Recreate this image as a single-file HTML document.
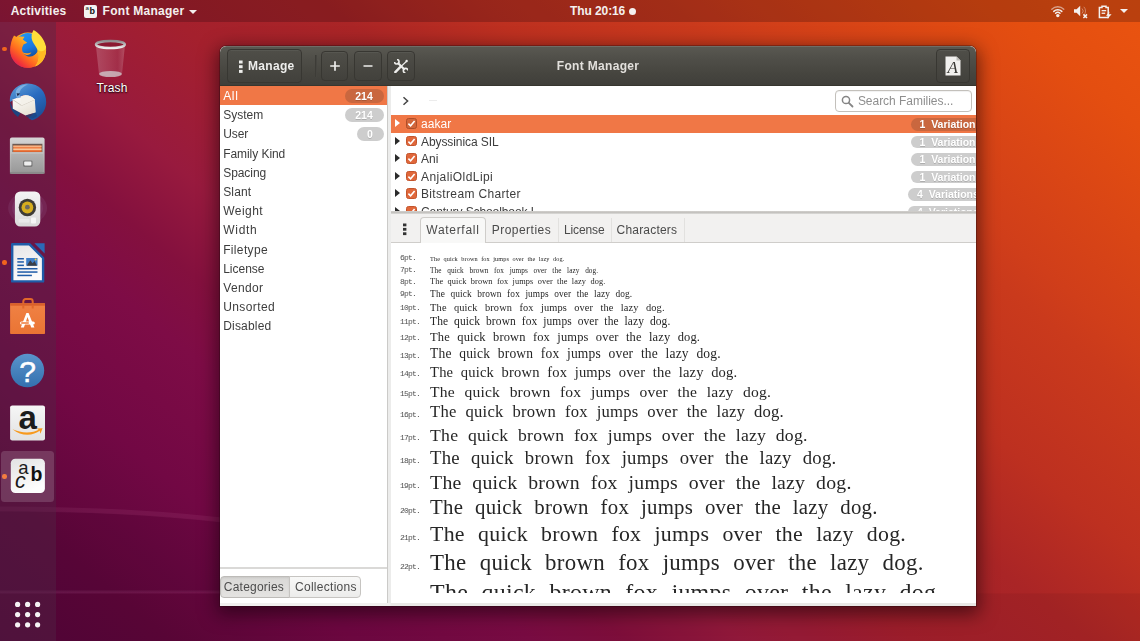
<!DOCTYPE html>
<html>
<head>
<meta charset="utf-8">
<title>Font Manager</title>
<style>
*{box-sizing:border-box;margin:0;padding:0}
html,body{width:1140px;height:641px;overflow:hidden}
body{position:relative;font-family:"Liberation Sans","DejaVu Sans",sans-serif;font-size:12px;color:#3c3c3c;background:#7a0d40}
#bg{position:absolute;left:0;top:0;width:1140px;height:641px;background:
 linear-gradient(40deg,#52053a 0%,#5c063a 9%,#720844 19%,#7e0c46 28%,#84103e 33%,#981a3e 39%,#a4202d 48%,#aa2526 57%,#bd3020 65%,#ca3a1c 75%,#d03e1a 78%,#e44e10 92%,#ea5410 100%)}
#topbar{position:absolute;left:0;top:0;width:1140px;height:22px;background:rgba(20,0,8,.22);color:#f4f0ee;font-weight:bold;font-size:12px;line-height:22.6px}
#topbar span{top:0;white-space:nowrap}
#dock{position:absolute;left:0;top:22px;width:56px;height:619px;background:rgba(81,40,70,.40)}
.ind{position:absolute;left:2.2px;width:4.4px;height:4.4px;border-radius:2.2px;background:#f0641e}
.dk{position:absolute;left:8px;width:40px;height:40px}
#win{will-change:transform;position:absolute;left:220px;top:46px;width:756px;height:559.5px;background:#fff;border-radius:6px 6px 0 0;box-shadow:0 5px 18px 3px rgba(15,0,8,.55),0 0 0 1px rgba(40,10,10,.30);overflow:hidden}
#hdr{position:absolute;left:0;top:0;width:756px;height:40px;background:linear-gradient(#5a5952,#504f49 30%,#46453f 70%,#403f3a);border-bottom:1px solid #37362f;color:#eee;border-radius:6px 6px 0 0;box-shadow:inset 0 1px 0 rgba(255,255,255,.12)}
.hb{position:absolute;border:1px solid #383732;border-radius:4px;background:linear-gradient(#4f4e48,#42413c);box-shadow:inset 0 1px 0 rgba(255,255,255,.05);color:#eeeeec;font-weight:bold;font-size:12px;text-align:center}
#side{position:absolute;left:0;top:40px;width:166.5px;height:520px;background:#fff}
.sr{position:absolute;left:0;width:166.5px;height:19.2px;line-height:20px;font-size:12px;color:#3d3d3d;white-space:nowrap}
.sr.sel{background:#f07746;color:#fff}
.bd{position:absolute;right:3px;top:2.5px;height:14px;border-radius:7px;background:#cdcdcd;color:#fff;font-weight:bold;font-size:10.5px;line-height:14px;text-align:center;letter-spacing:0;text-shadow:0 1px 0 rgba(0,0,0,.15)}
.sel .bd,.sel .vb{background:#c9673f}
#vsep{position:absolute;left:166.5px;top:40px;width:4px;height:520px;background:#ececeb;border-left:1.5px solid #cbcac8}
#right{position:absolute;left:170.5px;top:40px;width:585.5px;height:520px;background:#fff;overflow:hidden}
.fr{position:absolute;left:0;width:586px;height:17.5px;line-height:18.5px;font-size:12px;color:#3d3d3d;white-space:nowrap}
.fr.sel{background:#f07746;color:#fff}
.tri{position:absolute;left:4.5px;top:4.2px;width:0;height:0;border-left:5.5px solid #2b2b2b;border-top:4.5px solid transparent;border-bottom:4.5px solid transparent}
.sel .tri{border-left-color:#fff}
.cb{position:absolute;left:15.6px;top:3.2px;width:10.5px;height:10.5px;border-radius:2.5px;background:#e0673a;border:1px solid #c4552c}
.sel .cb{background:#d2653a;border-color:#ae4e29}
.cb svg{position:absolute;left:-1px;top:-1px}
.vb{position:absolute;top:3px;height:12.5px;border-radius:7px;background:#cdcdcd;color:#fff;font-weight:bold;font-size:10.5px;line-height:12.5px;white-space:pre;letter-spacing:0;text-shadow:0 1px 0 rgba(0,0,0,.15)}
.wf{position:absolute;left:39.6px;height:0;line-height:0;white-space:pre;font-family:"Liberation Serif","DejaVu Serif",serif;color:#262626;letter-spacing:.012em}
.pt{position:absolute;left:9.6px;height:0;line-height:0;font-family:"Liberation Mono","DejaVu Sans Mono",monospace;font-size:8px;letter-spacing:-.85px;color:#505050;white-space:pre}
.tab{top:0;height:29px;line-height:33px;font-size:12px;color:#4a4a4a;white-space:nowrap}
</style>
</head>
<body>
<div id="bg"></div>
<svg style="position:absolute;left:0;top:0" width="1140" height="641" viewBox="0 0 1140 641">
 <path d="M0 511C80 511 160 515 222 522L560 560L560 592L0 592Z" fill="rgba(30,0,30,.07)"/>
 <path d="M0 509C80 509 160 513 222 520L420 548" stroke="rgba(255,170,220,.075)" stroke-width="5" fill="none"/>
 <defs><linearGradient id="ln" x1="0" y1="0" x2="1" y2="0"><stop offset="0" stop-color="#ffbee6" stop-opacity=".08"/><stop offset=".35" stop-color="#ffbee6" stop-opacity=".06"/><stop offset=".55" stop-color="#ffbee6" stop-opacity="0"/></linearGradient></defs><rect x="0" y="590.500" width="1140" height="3" fill="url(#ln)"/>
 <rect x="0" y="593.500" width="1140" height="48" fill="rgba(40,0,20,.07)"/>
</svg>

<div id="topbar">
 <span style="position:absolute;left:10.70px;letter-spacing:0.25px;">Activities</span>
 <div style="position:absolute;left:84px;top:4.5px;width:13px;height:13px;border-radius:2px;background:#f4f3f1;color:#111;line-height:13px"><span style="position:absolute;left:1.5px;top:-2.5px;font-weight:normal;font-size:6px">a</span><span style="position:absolute;left:5.5px;top:.5px;font-size:9px">b</span></div>
 <span style="position:absolute;left:102.60px;letter-spacing:0.27px;">Font Manager</span>
 <div style="position:absolute;left:188.6px;top:9.8px;width:0;height:0;border-top:4.2px solid #f4f0ee;border-left:4px solid transparent;border-right:4px solid transparent"></div>
 <span style="position:absolute;left:570.00px;letter-spacing:-0.09px;">Thu 20:16</span>
 <div style="position:absolute;left:629px;top:7.5px;width:7px;height:7px;border-radius:4px;background:#f4f0ee"></div>
<svg style="position:absolute;left:1050px;top:4px" width="16" height="14" viewBox="0 0 16 14">
 <g fill="none" stroke="#f4f0ee" stroke-linecap="round"><path d="M1.800 5.200A8.600 8.600 0 0 1 13.800 5.200" stroke-width="1.300" opacity=".55"/><path d="M3.800 7.400A5.800 5.800 0 0 1 11.800 7.400" stroke-width="1.500"/><path d="M5.600 9.300A3.200 3.200 0 0 1 10 9.300" stroke-width="1.500"/></g>
 <circle cx="7.800" cy="11.600" r="1.700" fill="#f4f0ee"/>
</svg>
<svg style="position:absolute;left:1073px;top:4px" width="16" height="15" viewBox="0 0 16 15">
 <path d="M1 5.200H3.600L7.200 1.800V12.200L3.600 8.800H1Z" fill="#f4f0ee"/>
 <g fill="none" stroke="#f4f0ee" stroke-width="1" opacity=".4"><path d="M9 4.500A3.500 3.500 0 0 1 9 9.500"/><path d="M10.800 2.800A6 6 0 0 1 10.800 11.200"/></g>
 <path d="M10.400 10.400L14 14M14 10.400L10.400 14" stroke="#f4f0ee" stroke-width="1.500"/>
</svg>
<svg style="position:absolute;left:1098px;top:4.500px" width="15" height="14" viewBox="0 0 15 14">
 <path d="M4 1.200H8V2.600H10.200V12.600H1.400V2.600H4Z" fill="none" stroke="#f4f0ee" stroke-width="1.500"/>
 <rect x="3.600" y="5" width="4.600" height="1.300" fill="#f4f0ee"/><rect x="3.600" y="7.600" width="3.600" height="1.300" fill="#f4f0ee"/>
 <path d="M11.500 6.500L8 10.800H10.400L9.400 13.800L13.600 9.200H11Z" fill="#f4f0ee"/>
</svg>
<div style="position:absolute;left:1119.500px;top:9px;width:0;height:0;border-top:4.500px solid #f4f0ee;border-left:4px solid transparent;border-right:4px solid transparent"></div>

</div>
<div id="dock">
<div class="ind" style="top:24.600px"></div>
<div class="ind" style="top:238.400px"></div>
<div class="ind" style="top:452.300px"></div>
<!-- firefox : page region (4,24)-(54,74) -->
<svg class="dk" style="left:4px;top:2px;width:50px;height:50px" viewBox="0 0 50 50">
 <defs>
  <linearGradient id="ffo" x1="0.850" y1="0.150" x2="0.150" y2="0.900"><stop offset="0" stop-color="#ffd43a"/><stop offset="0.350" stop-color="#ffa722"/><stop offset="0.650" stop-color="#ff6a1f"/><stop offset="0.900" stop-color="#f0303c"/><stop offset="1" stop-color="#d8245a"/></linearGradient>
  <linearGradient id="ffb" x1="0.300" y1="0" x2="0.700" y2="1"><stop offset="0" stop-color="#1f95f5"/><stop offset="0.600" stop-color="#1a78e0"/><stop offset="1" stop-color="#15509e"/></linearGradient>
 </defs>
 <circle cx="23.900" cy="26.200" r="17.600" fill="url(#ffo)"/>
 <circle cx="23.800" cy="21" r="12" fill="url(#ffb)"/>
 <path d="M10 11.500L13.500 13.500L16 12.500L20.500 12.800L18.800 15.500L23.200 18.800L19.500 20.500L18.200 23.500C17.500 27 19.500 31 24 32.500C28.500 33.800 32.500 31 33.500 27C34.200 24 33 21 31 19L42 22C43 33 35 43.800 23.900 43.800C14 43.800 6.300 36 6.300 26.200C6.300 20.500 7.500 15.500 10 11.500Z" fill="url(#ffo)"/>
 <path d="M18.500 28.300C21 29.800 25 29.600 27.400 28.300C26.500 30.600 24.500 31.300 22.500 31C20.500 30.700 19.200 29.800 18.500 28.300Z" fill="#ff9a1f"/>
 <path d="M29.600 5.900C35 9 40.500 15 41.800 22C42.800 28 41.500 33 38.500 37C36.500 39.500 34 41.500 31 42.500C35 38 36 31 33.500 25.700C31.500 22 29.500 19.500 28.200 16.500C27 13 27.500 9 29.600 5.900Z" fill="#ffde3a"/>
 <path d="M33.500 25.700C36 31 35 38 31 42.500C34 41.500 36.500 39.500 38.500 37C41 33.500 42.300 29 41.900 24C40 28 37 28 33.500 25.700Z" fill="#ffb21f" opacity=".85"/>
</svg>
<!-- thunderbird : page region (4,78)-(54,128) -->
<svg class="dk" style="left:4px;top:56px;width:50px;height:50px" viewBox="0 0 50 50">
 <defs>
  <linearGradient id="tbb" x1="0.200" y1="0" x2="0.800" y2="1"><stop offset="0" stop-color="#5a9ad6"/><stop offset="0.450" stop-color="#2a6cc0"/><stop offset="1" stop-color="#1a4c94"/></linearGradient>
  <linearGradient id="tbe" x1="0" y1="0" x2="0.600" y2="1"><stop offset="0" stop-color="#ffffff"/><stop offset="1" stop-color="#e8e2d6"/></linearGradient>
 </defs>
 <path d="M6 24C5 14 13 5.500 24 5.500C35 5.500 42.500 14 42.200 24.500C42 33 36 40 28 42.200L24.500 40L29 36L31 27L28 20L20 17L13 20Z" fill="url(#tbb)"/>
 <path d="M6 24C6 30 9 35.500 14 39L16.500 35L9 30.500Z" fill="#1d447f"/>
 <path d="M8.600 21.500L18 18C22 16.500 27 17.500 30.800 21.500L31.800 34.500L21.500 37.600L8.800 30.800Z" fill="url(#tbe)"/>
 <path d="M8.600 21.500L17.500 27.500L30.800 21.500" fill="none" stroke="#cfc8bc" stroke-width="0.900"/>
 <path d="M17.500 27.500L30.800 21.500C27 17.500 22 16.500 18 18C16 19.500 16 23.500 17.500 27.500Z" fill="#f4f1ea"/>
 <path d="M12 13C14 8.500 19 6 24 6.500C20 8 17 10.500 15.800 13.500C15 16 15.500 18 17 19.500L13.200 20.300C11.800 18 11.300 15.500 12 13Z" fill="#7db0e0"/>
 <path d="M12.600 15.200L16.200 15.400L13.600 18.200Z" fill="#1b2c4e"/>
 <path d="M21.500 37.600L31.800 34.500L33 38C30 41 25 42 21.500 37.600Z" fill="#1d447f" opacity=".7"/>
</svg>
<!-- files : page region (4,132)-(54,182) -->
<svg class="dk" style="left:4px;top:110px;width:50px;height:50px" viewBox="0 0 50 50">
 <defs>
  <linearGradient id="fl1" x1="0" y1="0" x2="0" y2="1"><stop offset="0" stop-color="#d6d6d6"/><stop offset="1" stop-color="#a2a2a2"/></linearGradient>
  <linearGradient id="fl2" x1="0" y1="0" x2="0" y2="1"><stop offset="0" stop-color="#b4b4b4"/><stop offset="1" stop-color="#9a9a9a"/></linearGradient>
 </defs>
 <rect x="5.900" y="5.500" width="34.700" height="36.200" rx="2" fill="url(#fl1)"/>
 <rect x="8.400" y="11.800" width="30" height="9" fill="#6e5a52"/>
 <rect x="9.300" y="13.600" width="28.200" height="6.800" fill="#f08248"/>
 <rect x="9.300" y="13.600" width="28.200" height="1.400" fill="#f6b486"/>
 <rect x="9.300" y="16.600" width="28.200" height="1.300" fill="#f9d0a6"/>
 <rect x="9.300" y="18.800" width="28.200" height="1" fill="#d9602c"/>
 <rect x="7.200" y="20.300" width="32.200" height="19.600" rx="1.300" fill="url(#fl2)"/>
 <rect x="7.200" y="20.300" width="32.200" height="1.300" fill="#c6c6c6"/>
 <rect x="19" y="28.400" width="9.600" height="6.600" rx="1.400" fill="#7c7c7c"/>
 <rect x="20.200" y="29.600" width="7.200" height="3.800" rx="0.800" fill="#efefef"/>
 <rect x="5.900" y="39.900" width="34.700" height="1.800" fill="#8a8a8a"/>
</svg>
<!-- rhythmbox : page region (4,186)-(54,236) -->
<svg class="dk" style="left:4px;top:164px;width:50px;height:50px" viewBox="0 0 50 50">
 <defs><linearGradient id="rb" x1="0" y1="0" x2="0" y2="1"><stop offset="0" stop-color="#f4f4f4"/><stop offset="1" stop-color="#d9d9d9"/></linearGradient></defs>
 <ellipse cx="23.600" cy="22" rx="19.500" ry="16" fill="rgba(190,170,220,.10)"/>
 <ellipse cx="23.600" cy="22" rx="15.500" ry="13" fill="rgba(190,170,220,.10)"/>
 <rect x="10.900" y="5.500" width="25.400" height="35.100" rx="5.500" fill="url(#rb)"/>
 <circle cx="23.400" cy="21.500" r="8.700" fill="#3e3c36"/>
 <circle cx="23.400" cy="21.500" r="5.900" fill="#d6ae1e"/>
 <circle cx="23.400" cy="21.200" r="2.400" fill="#6e6a60"/>
 <rect x="27" y="31.500" width="5" height="6" rx="1" fill="#f6f6f6"/>
 <rect x="14.500" y="33" width="11" height="3.500" rx="1" fill="#e9e9e9"/>
</svg>
<!-- writer : page region (4,238)-(54,288) -->
<svg class="dk" style="left:4px;top:216px;width:50px;height:50px" viewBox="0 0 50 50">
 <defs><linearGradient id="wr" x1="0" y1="0" x2="0.300" y2="1"><stop offset="0" stop-color="#e6e6e6"/><stop offset="1" stop-color="#fbfbfb"/></linearGradient></defs>
 <path d="M8.200 6.200H25.300L39.100 20V43.400H8.200Z" fill="url(#wr)" stroke="#1f5ca8" stroke-width="2.400" stroke-linejoin="round"/>
 <path d="M30.400 5.200H40.600V15.400Z" fill="#2a6ab8"/>
 <g fill="#1f5ca8"><rect x="13.300" y="20" width="6.600" height="1.500"/><rect x="13.300" y="23.200" width="6.600" height="1.500"/><rect x="13.300" y="26.600" width="6.600" height="1.500"/><rect x="13.300" y="30" width="20.200" height="1.500"/><rect x="13.300" y="33.300" width="20.200" height="1.500"/><rect x="13.300" y="36.700" width="14.600" height="1.500"/></g>
 <rect x="22.200" y="20" width="11.300" height="7.700" fill="#3f7fc8"/>
 <path d="M22.800 27.700L26.200 22.200L28.600 25.200L30.600 23L33 27.700Z" fill="#3a3f48"/>
 <circle cx="31.600" cy="21.500" r="0.900" fill="#f6d13a"/>
</svg>
<!-- software : page region (4,292)-(54,342) -->
<svg class="dk" style="left:4px;top:270px;width:50px;height:50px" viewBox="0 0 50 50">
 <defs><linearGradient id="sw" x1="0" y1="0" x2="0" y2="1"><stop offset="0" stop-color="#f08244"/><stop offset="1" stop-color="#ea7434"/></linearGradient></defs>
 <path d="M19.300 16.400V9.500C19.300 7.800 20.400 7.100 21.600 7.100H26.400C27.600 7.100 28.700 7.800 28.700 9.500V16.400" stroke="#e2682a" stroke-width="2" fill="none"/>
 <rect x="6.100" y="11.300" width="34.900" height="30.800" rx="0.800" fill="url(#sw)"/>
 <rect x="6.100" y="11.300" width="34.900" height="2.400" fill="#d9602a"/>
 <path d="M19.300 13.700V16.400M28.700 13.700V16.400" stroke="#e2682a" stroke-width="2"/>
 <path d="M16.800 35.600L22.400 21H24.600L30.400 35.600H27.200L23.500 25L19.900 35.600Z" fill="#fff"/>
 <rect x="16" y="29.400" width="14.800" height="3.200" rx="1.600" fill="#fff"/>
 <rect x="17" y="30.300" width="8" height="1.400" rx="0.700" fill="#ee7a3a"/>
</svg>
<!-- help : page region (4,346)-(54,396) -->
<svg class="dk" style="left:4px;top:324px;width:50px;height:50px" viewBox="0 0 50 50">
 <defs><linearGradient id="hp" x1="0" y1="0" x2="0" y2="1"><stop offset="0" stop-color="#5a94cc"/><stop offset="1" stop-color="#3370ae"/></linearGradient></defs>
 <circle cx="23.400" cy="24.500" r="16.800" fill="url(#hp)"/>
 <text x="23.500" y="36.400" font-family="Liberation Sans,sans-serif" font-size="30" text-anchor="middle" fill="#fff" stroke="#fff" stroke-width="0.500">?</text>
</svg>
<!-- amazon : page region (4,398)-(54,448) -->
<svg class="dk" style="left:4px;top:376px;width:50px;height:50px" viewBox="0 0 50 50">
 <defs><linearGradient id="am" x1="0" y1="0" x2="0" y2="1"><stop offset="0" stop-color="#f6f6f6"/><stop offset="1" stop-color="#e2e2e2"/></linearGradient></defs>
 <rect x="6.100" y="7.400" width="34.900" height="35.100" rx="2.200" fill="url(#am)"/>
 <text x="23.700" y="30.800" font-family="Liberation Sans,sans-serif" font-weight="bold" font-size="33" text-anchor="middle" fill="#1c1c1c">a</text>
 <path d="M8.600 31.200C17 38.500 29 38.300 36 32.600L35.200 31.400C28 35.600 17 35.200 8.600 31.200Z" fill="#f79a1e"/>
 <path d="M32.600 30.600L38.600 30.200L36.400 35.800L35.600 32.600Z" fill="#f79a1e"/>
</svg>
<!-- font manager highlighted : page (1.4,450.8)-(53.8,502.3) -->
<div style="position:absolute;left:1.400px;top:428.800px;width:52.400px;height:51.500px;border-radius:3.500px;background:rgba(255,255,255,.155)"></div>
<svg class="dk" style="left:0;top:426px;width:60px;height:60px" viewBox="0 0 60 60">
 <defs><linearGradient id="fm" x1="0" y1="0" x2="0.400" y2="1"><stop offset="0" stop-color="#e2e2e2"/><stop offset="1" stop-color="#fdfdfd"/></linearGradient></defs>
 <rect x="10.800" y="10.800" width="34.100" height="34.200" rx="4.500" fill="url(#fm)"/>
 <text x="23.400" y="25.700" font-family="Liberation Sans,sans-serif" font-size="18.500" text-anchor="middle" fill="#1a1a1a">a</text>
 <text x="36.400" y="32.800" font-family="Liberation Sans,sans-serif" font-weight="bold" font-size="19.500" text-anchor="middle" fill="#111">b</text>
 <text x="20.400" y="39.800" font-family="Liberation Sans,sans-serif" font-style="italic" font-size="21.500" text-anchor="middle" fill="#1a1a1a">c</text>
</svg>
<!-- app grid -->
<svg style="position:absolute;left:14px;top:578.500px" width="28" height="28" viewBox="0 0 28 28">
 <g fill="#f6f2f4"><circle cx="3.600" cy="3.400" r="2.600"/><circle cx="13.600" cy="3.400" r="2.600"/><circle cx="23.600" cy="3.400" r="2.600"/><circle cx="3.600" cy="13.600" r="2.600"/><circle cx="13.600" cy="13.600" r="2.600"/><circle cx="23.600" cy="13.600" r="2.600"/><circle cx="3.600" cy="23.800" r="2.600"/><circle cx="13.600" cy="23.800" r="2.600"/><circle cx="23.600" cy="23.800" r="2.600"/></g>
</svg>

</div>
<svg style="position:absolute;left:94px;top:38px" width="34" height="42" viewBox="0 0 34 42">
 <defs>
  <linearGradient id="tr" x1="0" y1="0" x2="1" y2="0"><stop offset="0" stop-color="#fff" stop-opacity=".20"/><stop offset=".45" stop-color="#fff" stop-opacity=".13"/><stop offset=".75" stop-color="#d8d0e0" stop-opacity=".10"/><stop offset="1" stop-color="#fff" stop-opacity=".22"/></linearGradient>
  <linearGradient id="trr" x1="0" y1="0" x2="0" y2="1"><stop offset="0" stop-color="#8e8a8c"/><stop offset=".55" stop-color="#c2c1c2"/><stop offset="1" stop-color="#efefef"/></linearGradient>
 </defs>
 <path d="M1.800 7L5 35.800C5 38.800 28 38.800 28 35.800L31 7C31 11.500 1.800 11.500 1.800 7Z" fill="url(#tr)"/>
 <ellipse cx="16.500" cy="36" rx="11.400" ry="3.100" fill="#cfc8cc" opacity=".78"/>
 <ellipse cx="16.400" cy="6.500" rx="14.400" ry="3.500" fill="rgba(60,10,30,.18)" stroke="url(#trr)" stroke-width="2.400"/>
</svg>
<div style="position:absolute;left:81px;top:80px;width:62px;text-align:center;font-size:12px;letter-spacing:.15px;color:#fff;line-height:16px;text-shadow:0 1px 1.500px rgba(0,0,0,.85),0 0 2px rgba(0,0,0,.5)">Trash</div>

<div id="win">
 <div id="hdr">
  <div class="hb" style="left:6.5px;top:2.5px;width:75px;height:34px;line-height:32.5px;text-align:left"><span style="position:absolute;left:20.60px;letter-spacing:0.28px;">Manage</span><svg width="6" height="14" style="position:absolute;left:10.5px;top:10.5px" viewBox="0 0 6 14"><rect x="1" y="0.5" width="3.6" height="3" fill="#eeeeec"/><rect x="1" y="5.2" width="3.6" height="3" fill="#eeeeec"/><rect x="1" y="9.9" width="3.6" height="3" fill="#eeeeec"/></svg></div>
  <div style="position:absolute;left:95px;top:9px;width:1px;height:22px;background:#3d3c37"></div><div style="position:absolute;left:96px;top:9px;width:1px;height:22px;background:#464540"></div>
  <div class="hb" style="left:100.8px;top:5px;width:27.5px;height:29.5px"><svg width="12" height="12" style="position:absolute;left:6.8px;top:8px" viewBox="0 0 12 12"><path d="M6 1.2V10.8M1.2 6H10.8" stroke="#eeeeec" stroke-width="1.7" fill="none"/></svg></div>
  <div class="hb" style="left:134.2px;top:5px;width:27.5px;height:29.5px"><svg width="12" height="12" style="position:absolute;left:6.8px;top:8px" viewBox="0 0 12 12"><path d="M1.5 6H10.5" stroke="#eeeeec" stroke-width="1.7" fill="none"/></svg></div>
  <div class="hb" style="left:167.3px;top:5px;width:28px;height:29.5px"><svg width="14.4" height="14.4" style="position:absolute;left:5.800px;top:6.900px" viewBox="0 0 14 14"><g stroke="#eeeeec" fill="none"><path d="M1.300 12.700L6 8" stroke-width="2.400" stroke-linecap="round"/><path d="M6 8L12 2.400" stroke-width="1.100"/><path d="M3.600 3.600L10.400 10.400" stroke-width="2.100"/><path d="M2.890 0.510A2.200 2.200 0 1 1 0.510 2.890" stroke-width="1.600"/><path d="M11.110 13.490A2.200 2.200 0 1 1 13.490 11.110" stroke-width="1.600"/></g><circle cx="12.300" cy="2" r="1.150" fill="#eeeeec"/></svg>
</div>
  <div style="position:absolute;left:0;width:756px;top:0;height:40px;line-height:41px;font-weight:bold;font-size:12px;color:#e2e0dc;white-space:nowrap"><span style="position:absolute;left:336.80px;letter-spacing:0.32px;">Font Manager</span></div>
  <div class="hb" style="left:716px;top:2.5px;width:33.5px;height:34px"><svg width="16" height="20" style="position:absolute;left:8px;top:6.5px" viewBox="0 0 16 20"><path d="M0.5 0.5H11.5L15.5 4.5V19.5H0.5Z" fill="#f1f0ee"/><path d="M11.5 0.5V4.5H15.5Z" fill="#bdbcb8"/><text x="7.6" y="16.6" font-family="Liberation Serif,serif" font-style="italic" font-weight="normal" font-size="17" text-anchor="middle" fill="#3a3935">A</text></svg></div>
 </div>
 <div id="side">
  <div class="sr sel" style="top:0.00px"><span style="position:absolute;left:3.20px;letter-spacing:0.68px;">All</span><span class="bd" style="width:39px">214</span></div>
  <div class="sr" style="top:19.20px"><span style="position:absolute;left:3.20px;letter-spacing:-0.00px;">System</span><span class="bd" style="width:39px">214</span></div>
  <div class="sr" style="top:38.40px"><span style="position:absolute;left:3.20px;letter-spacing:-0.11px;">User</span><span class="bd" style="width:27px">0</span></div>
  <div class="sr" style="top:57.60px"><span style="position:absolute;left:3.20px;letter-spacing:-0.06px;">Family Kind</span></div>
  <div class="sr" style="top:76.80px"><span style="position:absolute;left:3.20px;letter-spacing:-0.06px;">Spacing</span></div>
  <div class="sr" style="top:96.00px"><span style="position:absolute;left:3.20px;letter-spacing:0.14px;">Slant</span></div>
  <div class="sr" style="top:115.20px"><span style="position:absolute;left:3.20px;letter-spacing:0.47px;">Weight</span></div>
  <div class="sr" style="top:134.40px"><span style="position:absolute;left:3.20px;letter-spacing:0.73px;">Width</span></div>
  <div class="sr" style="top:153.60px"><span style="position:absolute;left:3.20px;letter-spacing:0.34px;">Filetype</span></div>
  <div class="sr" style="top:172.80px"><span style="position:absolute;left:3.20px;letter-spacing:-0.01px;">License</span></div>
  <div class="sr" style="top:192.00px"><span style="position:absolute;left:3.20px;letter-spacing:0.37px;">Vendor</span></div>
  <div class="sr" style="top:211.20px"><span style="position:absolute;left:3.20px;letter-spacing:0.41px;">Unsorted</span></div>
  <div class="sr" style="top:230.40px"><span style="position:absolute;left:3.20px;letter-spacing:0.19px;">Disabled</span></div>
  <div style="position:absolute;left:0;top:481px;width:166.5px;height:1.5px;background:#dad9d7"></div>
  <div style="position:absolute;left:0;top:489.5px;width:70px;height:22.5px;border:1px solid #bdbbb8;border-radius:4px 0 0 4px;background:linear-gradient(#d9d8d6,#e4e3e1);line-height:21px;font-size:12px;color:#4c4c4c;box-shadow:inset 0 1px 2px rgba(0,0,0,.08);white-space:nowrap"><span style="position:absolute;left:2.80px;letter-spacing:0.22px;">Categories</span></div>
  <div style="position:absolute;left:69px;top:489.5px;width:72px;height:22.5px;border:1px solid #c6c4c1;border-radius:0 4px 4px 0;background:linear-gradient(#f8f8f7,#ececeb);line-height:21px;font-size:12px;color:#4c4c4c;white-space:nowrap"><span style="position:absolute;left:5.00px;letter-spacing:0.28px;">Collections</span></div>
 </div>
 <div id="vsep"></div>
 <div id="right">
  <svg width="8" height="10" style="position:absolute;left:11.3px;top:9.6px" viewBox="0 0 8 10"><path d="M1.5 1.3L5.6 5L1.5 8.7" stroke="#454545" stroke-width="1.5" fill="none"/></svg>
  <div style="position:absolute;left:38px;top:13.5px;width:8px;height:1px;background:#ececec"></div>
  <div style="position:absolute;left:444px;top:3.5px;width:137px;height:22.5px;border:1px solid #c3c0bb;border-radius:4px;background:#fff;box-shadow:inset 0 1px 1px rgba(0,0,0,.06);line-height:21.5px;font-size:12px;color:#8e8e8e;white-space:nowrap"><svg width="13" height="13" style="position:absolute;left:5.5px;top:4px" viewBox="0 0 13 13"><circle cx="5" cy="5" r="3.6" stroke="#858585" stroke-width="1.5" fill="none"/><path d="M7.8 7.8L11.5 11.5" stroke="#858585" stroke-width="1.8" stroke-linecap="round"/></svg><span style="position:absolute;left:22.40px;letter-spacing:-0.03px;">Search Families...</span></div>
  <div class="fr sel" style="top:29.0px"><span class="tri"></span><span class="cb"><svg width="11" height="11" viewBox="0 0 11 11"><path d="M2.4 5.6L4.6 7.8L8.6 3" stroke="#fff" stroke-width="1.6" fill="none"/></svg></span><span style="position:absolute;left:30.50px;letter-spacing:0.07px;">aakar</span><span class="vb" style="left:520.0px;width:80px;padding-left:9px">1  Variation</span></div>
  <div class="fr" style="top:46.5px"><span class="tri"></span><span class="cb"><svg width="11" height="11" viewBox="0 0 11 11"><path d="M2.4 5.6L4.6 7.8L8.6 3" stroke="#fff" stroke-width="1.6" fill="none"/></svg></span><span style="position:absolute;left:30.50px;letter-spacing:-0.08px;">Abyssinica SIL</span><span class="vb" style="left:520.0px;width:80px;padding-left:9px">1  Variation</span></div>
  <div class="fr" style="top:64.0px"><span class="tri"></span><span class="cb"><svg width="11" height="11" viewBox="0 0 11 11"><path d="M2.4 5.6L4.6 7.8L8.6 3" stroke="#fff" stroke-width="1.6" fill="none"/></svg></span><span style="position:absolute;left:30.50px;letter-spacing:0.03px;">Ani</span><span class="vb" style="left:520.0px;width:80px;padding-left:9px">1  Variation</span></div>
  <div class="fr" style="top:81.5px"><span class="tri"></span><span class="cb"><svg width="11" height="11" viewBox="0 0 11 11"><path d="M2.4 5.6L4.6 7.8L8.6 3" stroke="#fff" stroke-width="1.6" fill="none"/></svg></span><span style="position:absolute;left:30.50px;letter-spacing:0.42px;">AnjaliOldLipi</span><span class="vb" style="left:520.0px;width:80px;padding-left:9px">1  Variation</span></div>
  <div class="fr" style="top:99.0px"><span class="tri"></span><span class="cb"><svg width="11" height="11" viewBox="0 0 11 11"><path d="M2.4 5.6L4.6 7.8L8.6 3" stroke="#fff" stroke-width="1.6" fill="none"/></svg></span><span style="position:absolute;left:30.50px;letter-spacing:0.34px;">Bitstream Charter</span><span class="vb" style="left:517.5px;width:80px;padding-left:9px">4  Variations</span></div>
  <div class="fr" style="top:116.5px"><span class="tri"></span><span class="cb"><svg width="11" height="11" viewBox="0 0 11 11"><path d="M2.4 5.6L4.6 7.8L8.6 3" stroke="#fff" stroke-width="1.6" fill="none"/></svg></span><span style="position:absolute;left:30.50px;letter-spacing:-0.09px;">Century Schoolbook L</span><span class="vb" style="left:517.5px;width:80px;padding-left:9px">4  Variations</span></div>
  <div style="position:absolute;left:0;top:124.5px;width:586px;height:3.5px;background:linear-gradient(#d2d0cd,#c4c2bf 50%,#dddcda);"></div>
  <div style="position:absolute;left:0;top:128px;width:586px;height:29px;background:#f2f1f0;border-bottom:1px solid #cfcdca">
   <svg width="6" height="14" style="position:absolute;left:11.5px;top:8.5px" viewBox="0 0 6 14"><rect x="1" y="0.5" width="3.4" height="2.8" fill="#333"/><rect x="1" y="4.9" width="3.4" height="2.8" fill="#333"/><rect x="1" y="9.3" width="3.4" height="2.8" fill="#333"/></svg>
   <div style="position:absolute;left:29px;top:2.5px;width:66px;height:27px;border:1px solid #cfcdca;border-bottom:none;border-radius:4px 4px 0 0;background:#f8f8f7"></div>
   <span class="tab" style="position:absolute;left:35.80px;letter-spacing:0.70px;">Waterfall</span>
   <span class="tab" style="position:absolute;left:101.20px;letter-spacing:0.48px;">Properties</span>
   <span class="tab" style="position:absolute;left:173.40px;letter-spacing:-0.11px;">License</span>
   <span class="tab" style="position:absolute;left:226.10px;letter-spacing:0.19px;">Characters</span>
   <div style="position:absolute;left:167px;top:4px;width:1px;height:24px;background:#e2e1df"></div>
   <div style="position:absolute;left:220px;top:4px;width:1px;height:24px;background:#e2e1df"></div>
   <div style="position:absolute;left:293px;top:4px;width:1px;height:24px;background:#e2e1df"></div>
  </div>
  <div style="position:absolute;left:0;top:157px;width:586px;height:349.6px;overflow:hidden;background:#fff">
   <div class="pt" style="top:14.87px">6pt.</div><div class="wf" style="top:15.79px;font-size:6.24px;word-spacing:1.92px">The quick brown fox jumps over the lazy dog.</div>
   <div class="pt" style="top:27.47px">7pt.</div><div class="wf" style="top:28.04px;font-size:7.28px;word-spacing:3.71px">The quick brown fox jumps over the lazy dog.</div>
   <div class="pt" style="top:39.17px">8pt.</div><div class="wf" style="top:39.39px;font-size:8.32px;word-spacing:2.11px">The quick brown fox jumps over the lazy dog.</div>
   <div class="pt" style="top:51.17px">9pt.</div><div class="wf" style="top:51.04px;font-size:9.36px;word-spacing:3.02px">The quick brown fox jumps over the lazy dog.</div>
   <div class="pt" style="top:65.37px">10pt.</div><div class="wf" style="top:64.89px;font-size:10.40px;word-spacing:4.57px">The quick brown fox jumps over the lazy dog.</div>
   <div class="pt" style="top:78.77px">11pt.</div><div class="wf" style="top:77.94px;font-size:11.44px;word-spacing:2.81px">The quick brown fox jumps over the lazy dog.</div>
   <div class="pt" style="top:95.37px">12pt.</div><div class="wf" style="top:94.19px;font-size:12.48px;word-spacing:4.05px">The quick brown fox jumps over the lazy dog.</div>
   <div class="pt" style="top:112.77px">13pt.</div><div class="wf" style="top:111.24px;font-size:13.52px;word-spacing:4.14px">The quick brown fox jumps over the lazy dog.</div>
   <div class="pt" style="top:130.77px">14pt.</div><div class="wf" style="top:128.89px;font-size:14.56px;word-spacing:3.76px">The quick brown fox jumps over the lazy dog.</div>
   <div class="pt" style="top:151.07px">15pt.</div><div class="wf" style="top:148.84px;font-size:15.60px;word-spacing:5.49px">The quick brown fox jumps over the lazy dog.</div>
   <div class="pt" style="top:171.97px">16pt.</div><div class="wf" style="top:169.38px;font-size:16.64px;word-spacing:4.64px">The quick brown fox jumps over the lazy dog.</div>
   <div class="pt" style="top:194.67px">17pt.</div><div class="wf" style="top:191.73px;font-size:17.68px;word-spacing:5.10px">The quick brown fox jumps over the lazy dog.</div>
   <div class="pt" style="top:218.47px">18pt.</div><div class="wf" style="top:215.18px;font-size:18.72px;word-spacing:6.25px">The quick brown fox jumps over the lazy dog.</div>
   <div class="pt" style="top:242.97px">19pt.</div><div class="wf" style="top:239.33px;font-size:19.76px;word-spacing:5.65px">The quick brown fox jumps over the lazy dog.</div>
   <div class="pt" style="top:268.47px">20pt.</div><div class="wf" style="top:264.48px;font-size:20.80px;word-spacing:6.42px">The quick brown fox jumps over the lazy dog.</div>
   <div class="pt" style="top:295.47px">21pt.</div><div class="wf" style="top:291.13px;font-size:21.84px;word-spacing:7.51px">The quick brown fox jumps over the lazy dog.</div>
   <div class="pt" style="top:324.47px">22pt.</div><div class="wf" style="top:319.78px;font-size:22.88px;word-spacing:7.22px">The quick brown fox jumps over the lazy dog.</div>
   <div class="wf" style="top:349.43px;font-size:23.92px;word-spacing:7.12px">The quick brown fox jumps over the lazy dog.</div>
  </div>
  <div style="position:absolute;left:0;top:516.5px;width:586px;height:4px;background:#e9e8e6"></div>
 </div>
 <div style="position:absolute;left:0;top:556.5px;width:170px;height:3px;background:#f1f0ef"></div>
</div>
</body>
</html>
